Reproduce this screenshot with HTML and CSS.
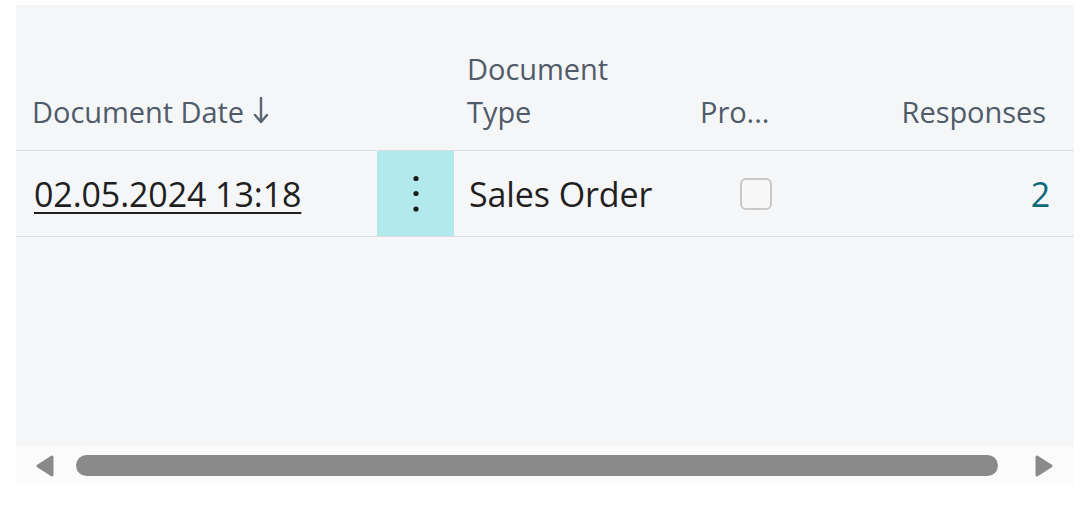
FILE: index.html
```html
<!DOCTYPE html>
<html>
<head>
<meta charset="utf-8">
<link rel="stylesheet" href="styles.css">
</head>
<body>
<div class="panel">
  <div class="grid">
    <div class="hcell c1"><span>Document Date</span><svg class="sort" width="16" height="28" viewBox="0 0 16 28"><path d="M8 1 V25 M2 18 L8 25 L14 18" fill="none" stroke="#5a6472" stroke-width="2.4" stroke-linecap="round" stroke-linejoin="round"/></svg></div>
    <div class="hcell c2"></div>
    <div class="hcell c3"><span>Document<br>Type</span></div>
    <div class="hcell c4"><span>Pro...</span></div>
    <div class="hcell c5 right"><span>Responses</span></div>

    <div class="cell c1"><a class="link">02.05.2024 13:18</a></div>
    <div class="cell c2 menu"><svg width="8" height="40" viewBox="0 0 8 40"><circle cx="4" cy="4.5" r="2.6"/><circle cx="4" cy="19.5" r="2.6"/><circle cx="4" cy="35" r="2.6"/></svg></div>
    <div class="cell c3">Sales Order</div>
    <div class="cell c4 center"><span class="check"></span></div>
    <div class="cell c5 right num">2</div>
  </div>
  <div class="fill"></div>
  <div class="scroll">
    <svg class="arrow" width="20" height="24" viewBox="0 0 20 24"><path d="M17 3 L3 12 L17 21 Z" fill="#8a8a8a" stroke="#8a8a8a" stroke-width="3" stroke-linejoin="round"/></svg>
    <span class="thumb"></span>
    <svg class="arrow" width="20" height="24" viewBox="0 0 20 24"><path d="M3 3 L17 12 L3 21 Z" fill="#8a8a8a" stroke="#8a8a8a" stroke-width="3" stroke-linejoin="round"/></svg>
  </div>
</div>
</body>
</html>
```
FILE: styles.css
```css
html, body { margin: 0; padding: 0; background: #ffffff; }
body { padding: 5px 13px 0 16px; font-family: "Open Sans", "Noto Sans", sans-serif; }
.panel { width: 1058px; background: #f5f6f8; display: flex; flex-direction: column; }
.grid { display: grid; grid-template-columns: 361px 77px 232px 140px 248px; grid-template-rows: 146px 86px; }
.hcell { border-bottom: 1px solid #dcdde0; display: flex; align-items: flex-end; padding: 0 14px 17px; box-sizing: border-box; font-size: 29px; line-height: 43px; color: #505b6a; letter-spacing: -0.05px; }
.hcell.c1 { padding-left: 16px; }
.hcell.c3 { padding-left: 13px; }
.hcell.right { justify-content: flex-end; padding-right: 28px; }
.sort { margin: 0 0 8px 9px; }
.cell { border-bottom: 1px solid #dcdde0; display: flex; align-items: center; padding: 0 14px; box-sizing: border-box; font-size: 34px; color: #1f1f1f; letter-spacing: -0.1px; }
.cell.c1 { padding-left: 18px; }
.cell.c3 { padding-left: 15px; }
.link { color: #1f1f1f; text-decoration: underline; text-decoration-thickness: 2px; text-underline-offset: 5px; }
.menu { background: #b2e9ec; justify-content: center; padding: 0; }
.menu svg { fill: #1b1b1b; }
.center { justify-content: center; }
.right { justify-content: flex-end; }
.cell.num { color: #0b6a78; padding-right: 24px; }
.check { width: 28px; height: 28px; border: 2px solid #c9c9c9; border-radius: 6px; background: #f7f7f7; }
.fill { height: 209px; }
.scroll { height: 39px; background: #fbfbfb; display: flex; align-items: center; padding: 0 19px 0 19px; }
.thumb { flex: 0 0 922px; height: 21px; border-radius: 11px; background: #8a8a8a; margin: 0 36px 0 21px; }
```
